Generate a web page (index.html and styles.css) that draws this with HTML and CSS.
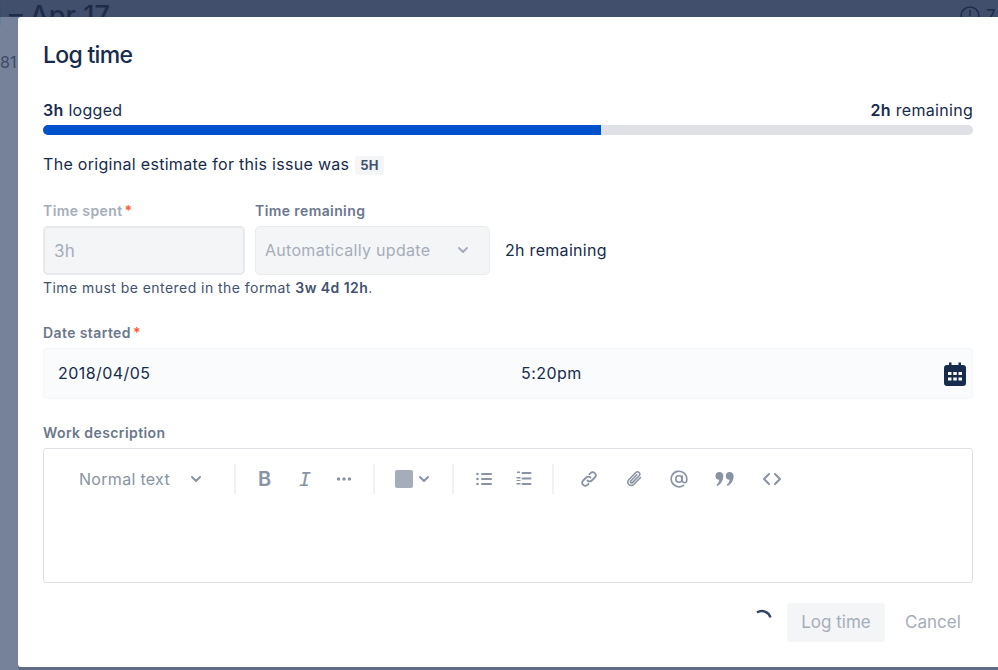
FILE: index.html
```html
<!DOCTYPE html>
<html lang="en">
<head>
    <meta charset="UTF-8">
    <title>Log time</title>
    <link rel="stylesheet" href="styles.css">
</head>
<body>
    <div class="backdrop">
        <div class="back-title">l – Apr 17</div>
        <div class="back-num">81</div>
        <div class="back-time">
            <svg width="20" height="20" viewBox="0 0 20 20" fill="none" stroke="#1e2c48" stroke-width="1.5"><circle cx="10" cy="10" r="9"/><path d="M10 4v6"/></svg>
            <span>7</span>
        </div>
    </div>

    <div class="modal">
        <h1>Log time</h1>

        <div class="progress-labels">
            <span><b>3h</b> logged</span>
            <span><b>2h</b> remaining</span>
        </div>
        <div class="progress"><div class="progress-fill"></div></div>

        <p class="estimate">The original estimate for this issue was <span class="tag">5H</span></p>

        <div class="time-row">
            <div class="time-spent">
                <label class="disabled-label">Time spent<i>*</i></label>
                <div class="input-spent">3h</div>
            </div>
            <div class="time-remaining">
                <label>Time remaining</label>
                <div class="select-remaining">
                    <span>Automatically update</span>
                    <svg width="12" height="8" viewBox="0 0 12 8" fill="none" stroke="#a5adba" stroke-width="2" stroke-linecap="round" stroke-linejoin="round"><path d="M2 2l4 4 4-4"/></svg>
                </div>
            </div>
            <div class="remaining-text">2h remaining</div>
        </div>
        <p class="help">Time must be entered in the format <b>3w 4d 12h</b>.</p>

        <label class="date-label">Date started<i>*</i></label>
        <div class="date-field">
            <span class="date-value">2018/04/05</span>
            <span class="time-value">5:20pm</span>
            <svg width="24" height="24" viewBox="0 0 24 24" fill="#172b4d"><path d="M6 0.500h2.500V3h7V0.500H18V3h2a3 3 0 0 1 3 3v15a3 3 0 0 1-3 3H4a3 3 0 0 1-3-3V6a3 3 0 0 1 3-3h2z"/><g fill="#fff"><rect x="5" y="10" width="3.500" height="3"/><rect x="10.250" y="10" width="3.500" height="3"/><rect x="15.500" y="10" width="3.500" height="3"/><rect x="5" y="15.500" width="3.500" height="3"/><rect x="10.250" y="15.500" width="3.500" height="3"/><rect x="15.500" y="15.500" width="3.500" height="3"/></g></svg>
        </div>

        <label class="desc-label">Work description</label>
        <div class="editor">
            <div class="toolbar">
                <div class="tb-group tb-style">
                    <span>Normal text</span>
                    <svg width="12" height="8" viewBox="0 0 12 8" fill="none" stroke="#8993a4" stroke-width="2" stroke-linecap="round" stroke-linejoin="round"><path d="M2 2l4 4 4-4"/></svg>
                </div>
                <div class="tb-group tb-format">
                    <span class="tb-bold">B</span>
                    <span class="tb-italic">I</span>
                    <svg width="16" height="4" viewBox="0 0 16 4" fill="#8993a4"><circle cx="2.500" cy="2" r="1.700"/><circle cx="8" cy="2" r="1.700"/><circle cx="13.500" cy="2" r="1.700"/></svg>
                </div>
                <div class="tb-group tb-color">
                    <span class="swatch"></span>
                    <svg width="12" height="8" viewBox="0 0 12 8" fill="none" stroke="#8993a4" stroke-width="2" stroke-linecap="round" stroke-linejoin="round"><path d="M2 2l4 4 4-4"/></svg>
                </div>
                <div class="tb-group tb-lists">
                    <svg width="16" height="14" viewBox="0 0 16 14" fill="#8993a4"><circle cx="1.500" cy="2" r="1.300"/><circle cx="1.500" cy="7" r="1.300"/><circle cx="1.500" cy="12" r="1.300"/><rect x="5" y="1" width="11" height="2" rx="1"/><rect x="5" y="6" width="11" height="2" rx="1"/><rect x="5" y="11" width="11" height="2" rx="1"/></svg>
                    <svg width="16" height="16" viewBox="0 0 16 16" fill="#8993a4"><rect x="1" y="0.500" width="3" height="1.500"/><rect x="0.500" y="6" width="4" height="1.500"/><rect x="0.500" y="12" width="4" height="1.500"/><rect x="0.500" y="9" width="4" height="1"/><rect x="5.500" y="1" width="10" height="2" rx="1"/><rect x="5.500" y="6.500" width="10" height="2" rx="1"/><rect x="5.500" y="12" width="10" height="2" rx="1"/></svg>
                </div>
                <div class="tb-group tb-insert">
                    <svg width="18" height="18" viewBox="0 0 18 18" fill="none" stroke="#8993a4" stroke-width="1.800" stroke-linecap="round"><path d="M7.500 10.500a3 3 0 0 0 4.300 0l3-3a3 3 0 0 0-4.300-4.300l-1 1"/><path d="M10.500 7.500a3 3 0 0 0-4.300 0l-3 3a3 3 0 0 0 4.300 4.300l1-1"/></svg>
                    <svg width="18" height="18" viewBox="0 0 18 18" fill="none" stroke="#8993a4" stroke-width="1.600" stroke-linecap="round"><path d="M15.500 7.500l-6.800 7a3.400 3.400 0 0 1-4.900-4.800l7-7.200a2.300 2.300 0 0 1 3.300 3.200l-6.700 6.900a1.100 1.100 0 0 1-1.600-1.600l6-6.200"/></svg>
                    <svg width="18" height="18" viewBox="0 0 18 18" fill="none" stroke="#8993a4" stroke-width="1.600" stroke-linecap="round"><circle cx="9" cy="9" r="3.200"/><path d="M12.200 6v4.200a2.300 2.300 0 0 0 4.600 0V9a7.800 7.800 0 1 0-3.200 6.300"/></svg>
                    <svg width="20" height="16" viewBox="0 0 20 16" fill="#8993a4"><path d="M4.500 1a3.800 3.800 0 0 1 3.800 4c0 4.500-2.300 8-6 10l-.8-1.200c1.500-1.200 2.500-2.700 2.800-5A3.800 3.800 0 0 1 4.500 1z"/><path d="M14.800 1a3.800 3.800 0 0 1 3.800 4c0 4.500-2.300 8-6 10l-.8-1.200c1.500-1.200 2.500-2.700 2.800-5a3.800 3.800 0 0 1 .2-7.800z"/></svg>
                    <svg width="20" height="14" viewBox="0 0 20 14" fill="none" stroke="#8993a4" stroke-width="2" stroke-linecap="round" stroke-linejoin="round"><path d="M7 2L2 7l5 5"/><path d="M13 2l5 5-5 5"/></svg>
                </div>
            </div>
        </div>

        <div class="footer">
            <svg class="spinner" width="20" height="20" viewBox="0 0 20 20" fill="none" stroke="#344563" stroke-width="2.400"><path d="M2 3.500a9 9 0 0 1 13.500 5"/></svg>
            <button class="btn-log" type="button">Log time</button>
            <button class="btn-cancel" type="button">Cancel</button>
        </div>
    </div>
</body>
</html>
```

FILE: styles.css
```css
* {
    box-sizing: border-box;
}

html, body {
    height: 100%;
}

body {
    margin: 0;
    background-color: #76829a;
    font-family: Inter, "Noto Sans", sans-serif;
    color: #172b4d;
    overflow: hidden;
}

.backdrop {
    position: absolute;
    inset: 0;
    background: linear-gradient(to bottom, #414f6c 0, #414f6c 17px, #76829a 17px);
    overflow: hidden;
}

.back-title {
    position: absolute;
    left: -5px;
    top: -1px;
    font-size: 27px;
    font-weight: 500;
    color: #1e2c48;
    white-space: nowrap;
}

.back-num {
    position: absolute;
    left: 0;
    top: 52px;
    font-size: 16px;
    color: #3c4a66;
}

.back-time {
    position: absolute;
    left: 960px;
    top: 6px;
    display: flex;
    gap: 6px;
    color: #1e2c48;
    font-size: 17px;
}

.modal {
    position: absolute;
    left: 18px;
    top: 17px;
    width: 980px;
    height: 650px;
    padding: 24px 25px 0;
    background-color: #fff;
    border-radius: 3px 0 0 3px;
    box-shadow: 0 3px 0 #5f6c84;
    letter-spacing: 0.3px;
}

h1 {
    margin: 0;
    font-size: 23px;
    line-height: 28px;
    font-weight: 500;
    letter-spacing: -0.7px;
}

.progress-labels {
    display: flex;
    justify-content: space-between;
    margin-top: 30px;
    font-size: 16px;
    line-height: 22px;
}

.progress-labels b {
    font-weight: 600;
}

.progress {
    height: 10px;
    margin-top: 4px;
    background-color: #dfe1e6;
    border-radius: 5px;
    overflow: hidden;
}

.progress-fill {
    width: 60%;
    height: 100%;
    background-color: #0052cc;
}

.estimate {
    margin: 18px 0 0;
    font-size: 16px;
    line-height: 22px;
}

.tag {
    display: inline-block;
    padding: 0 5px;
    font-size: 13px;
    line-height: 19px;
    font-weight: 700;
    color: #42526e;
    background-color: #f4f5f7;
    border-radius: 3px;
    margin-left: 1px;
}

label {
    display: block;
    font-size: 14px;
    line-height: 16px;
    font-weight: 600;
    color: #6b778c;
    letter-spacing: 0.4px;
}

label i {
    color: #ff5630;
    font-style: normal;
    margin-left: 2px;
}

.disabled-label {
    color: #a5adba;
}

.time-row {
    display: flex;
    align-items: flex-end;
    gap: 10px;
    margin-top: 28px;
}

.input-spent {
    width: 202px;
    height: 49px;
    margin-top: 7px;
    padding: 13px 9px 0;
    font-size: 17px;
    color: #a5adba;
    background-color: #f4f5f7;
    border: 2px solid #e8e9ed;
    border-radius: 5px;
}

.select-remaining {
    display: flex;
    align-items: center;
    justify-content: space-between;
    width: 235px;
    height: 49px;
    margin-top: 7px;
    padding: 0 20px 2px 9px;
    font-size: 16px;
    color: #a5adba;
    background-color: #f4f5f7;
    border: 1px solid #ebecf0;
    border-radius: 5px;
}

.remaining-text {
    height: 49px;
    margin-left: 5px;
    font-size: 16px;
    line-height: 49px;
}

.help {
    margin: 4px 0 0;
    font-size: 14px;
    line-height: 18px;
    color: #42526e;
    letter-spacing: 0.45px;
}

.help b {
    font-weight: 600;
}

.date-label {
    margin-top: 28px;
}

.date-field {
    display: flex;
    align-items: center;
    height: 51px;
    margin-top: 7px;
    padding: 0 5px 0 14px;
    font-size: 16px;
    letter-spacing: 0.45px;
    background-color: #fafbfc;
    border: 1px solid #f4f5f7;
    border-radius: 4px;
}

.date-value {
    width: 463px;
    padding-bottom: 2px;
}

.time-value {
    flex: 1;
    padding-bottom: 2px;
}

.desc-label {
    margin-top: 26px;
}

.editor {
    height: 135px;
    margin-top: 7px;
    border: 1px solid #dfe1e6;
    border-radius: 3px;
}

.toolbar {
    display: flex;
    align-items: center;
    height: 60px;
}

.tb-group {
    display: flex;
    align-items: center;
    height: 30px;
    border-right: 2px solid #f0f1f4;
    color: #8993a4;
}

.tb-style {
    width: 192px;
    padding-left: 35px;
    font-size: 16px;
    justify-content: space-between;
    padding-right: 32px;
}

.tb-format {
    width: 139px;
    padding-left: 22px;
    gap: 24px;
}

.tb-bold {
    font-size: 20px;
    font-weight: 600;
    width: 16px;
    letter-spacing: 0;
}

.tb-italic {
    font-size: 20px;
    font-style: italic;
    font-family: "DejaVu Sans Mono", monospace;
    width: 14px;
    text-align: center;
    letter-spacing: 0;
}

.tb-color {
    width: 79px;
    padding-left: 20px;
    gap: 5px;
}

.swatch {
    width: 18px;
    height: 18px;
    background-color: #a5adba;
    border-radius: 2px;
}

.tb-lists {
    width: 100px;
    padding-left: 22px;
    gap: 24px;
}

.tb-insert {
    border-right: none;
    padding-left: 26px;
    gap: 27px;
}

.footer {
    display: flex;
    align-items: center;
    justify-content: flex-end;
    margin-top: 19px;
    height: 40px;
}

.spinner {
    margin-right: 12px;
    margin-top: -7px;
}

button {
    height: 39px;
    border: none;
    border-radius: 3px;
    font-family: inherit;
    font-size: 17px;
    letter-spacing: 0;
    color: #a5adba;
    background: none;
}

.btn-log {
    width: 98px;
    background-color: #f4f5f7;
}

.btn-cancel {
    width: 88px;
    padding: 0 0 0 20px;
    text-align: left;
}
```
